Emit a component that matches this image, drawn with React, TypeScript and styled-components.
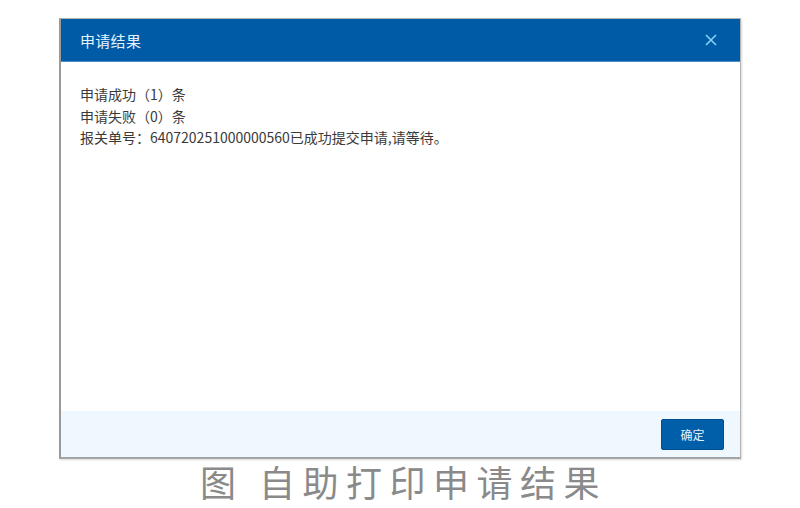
import React from "react";
import styled, { createGlobalStyle } from "styled-components";

const Global = createGlobalStyle`
  html, body { margin: 0; padding: 0; background: #ffffff; }
  body { font-family: "Noto Sans CJK SC", "Noto Sans", sans-serif; }
`;

const Page = styled.div`
  width: 800px;
  height: 508px;
  display: flex;
  flex-direction: column;
  align-items: center;
  padding-top: 18px;
  box-sizing: border-box;
  overflow: hidden;
`;

const Dialog = styled.div`
  width: 682px;
  height: 441px;
  flex: none;
  box-sizing: border-box;
  border: 1px solid #b4b4b4;
  border-left: 2px solid #9a9a9a;
  border-bottom: 2px solid #a4a4a4;
  display: flex;
  flex-direction: column;
  background: #ffffff;
  box-shadow: 1px 1px 2px rgba(0, 0, 0, 0.15);
`;

const Header = styled.div`
  height: 42px;
  flex: none;
  background: #005ba6;
  border-bottom: 1px solid #4b8fc9;
  display: flex;
  align-items: center;
  justify-content: space-between;
  padding: 0 22px 0 19px;
`;

const Title = styled.div`
  color: #e6f3ff;
  font-size: 15px;
  letter-spacing: 0.3px;
`;

const Close = styled.button`
  border: none;
  background: transparent;
  padding: 0;
  width: 14px;
  height: 14px;
  display: flex;
  align-items: center;
  justify-content: center;
  cursor: pointer;
`;

const Body = styled.div`
  flex: 1;
  padding: 22px 19px;
  display: flex;
  flex-direction: column;
`;

const Line = styled.div`
  font-size: 14px;
  line-height: 21.5px;
  color: #3a3a3a;
`;

const Footer = styled.div`
  height: 46px;
  flex: none;
  background: #eef8fe;
  display: flex;
  align-items: center;
  justify-content: flex-end;
  padding-right: 16px;
`;

const Button = styled.button`
  width: 63px;
  height: 31px;
  border-radius: 2px;
  border: 1px solid #004e92;
  background: #005fa8;
  color: #e8f2fb;
  font-family: "Noto Sans CJK SC", sans-serif;
  font-size: 12px;
  cursor: pointer;
  padding: 0;
`;

const Caption = styled.div`
  margin-top: 4px;
  color: #8a8a8a;
  font-size: 36px;
  line-height: 36px;
  letter-spacing: 7.5px;
  padding-left: 7px;
  font-family: "Noto Sans CJK SC", sans-serif;
  white-space: pre;
`;

export default function App() {
  return (
    <>
      <Global />
      <Page>
        <Dialog>
          <Header>
            <Title>申请结果</Title>
            <Close aria-label="关闭">
              <svg width="12" height="12" viewBox="0 0 12 12">
                <path d="M1 1 L11 11 M11 1 L1 11" stroke="#86d2f4" strokeWidth="1.6" />
              </svg>
            </Close>
          </Header>
          <Body>
            <Line>申请成功（1）条</Line>
            <Line>申请失败（0）条</Line>
            <Line>报关单号：640720251000000560已成功提交申请,请等待。</Line>
          </Body>
          <Footer>
            <Button>确定</Button>
          </Footer>
        </Dialog>
        <Caption>图 自助打印申请结果</Caption>
      </Page>
    </>
  );
}
